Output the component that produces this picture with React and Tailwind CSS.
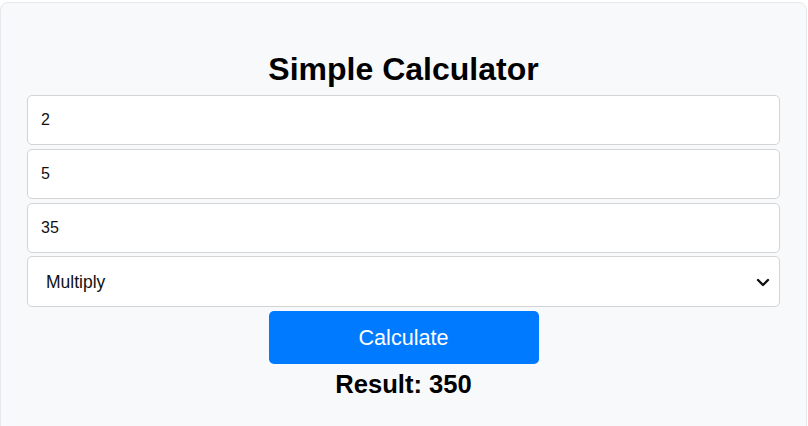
import React from "react";

export default function App() {
  return (
    <div className="w-[808px] h-[426px] bg-white overflow-hidden" style={{ fontFamily: '"Liberation Sans", Arial, sans-serif' }}>
      <div className="mt-[2px] h-[440px] w-[807px] rounded-lg border border-[#e6e8eb] bg-[#f8f9fa] pl-[26px] pr-[26px] pt-[48px]">
        <h1 className="text-center text-[32px] font-bold leading-[37px] text-black">Simple Calculator</h1>
        <div className="mt-[7px] flex flex-col gap-[3.8px]">
          {["2", "5", "35"].map((v) => (
            <div key={v} className="flex h-[50px] items-center rounded-[5px] border border-[#d4d4d4] bg-white pl-[13px] text-[16px] text-[#111]">
              {v}
            </div>
          ))}
          <div className="flex h-[51px] items-center justify-between rounded-[5px] border border-[#d4d4d4] bg-white pl-[18px] pr-[8px] text-[17.5px] text-[#111]">
            <span>Multiply</span>
            <svg width="14" height="10" viewBox="0 0 14 10" className="mr-[1px]">
              <path d="M2 3 L7 8 L12 3" fill="none" stroke="#111" strokeWidth="2.4" strokeLinecap="round" strokeLinejoin="round" />
            </svg>
          </div>
        </div>
        <div className="mt-[4px] flex justify-center">
          <button className="h-[53px] w-[270px] rounded-[5px] bg-[#007bff] text-[21.6px] text-white">Calculate</button>
        </div>
        <div className="mt-[5px] text-center text-[25.6px] font-bold leading-[30px] text-black">Result: 350</div>
      </div>
    </div>
  );
}
